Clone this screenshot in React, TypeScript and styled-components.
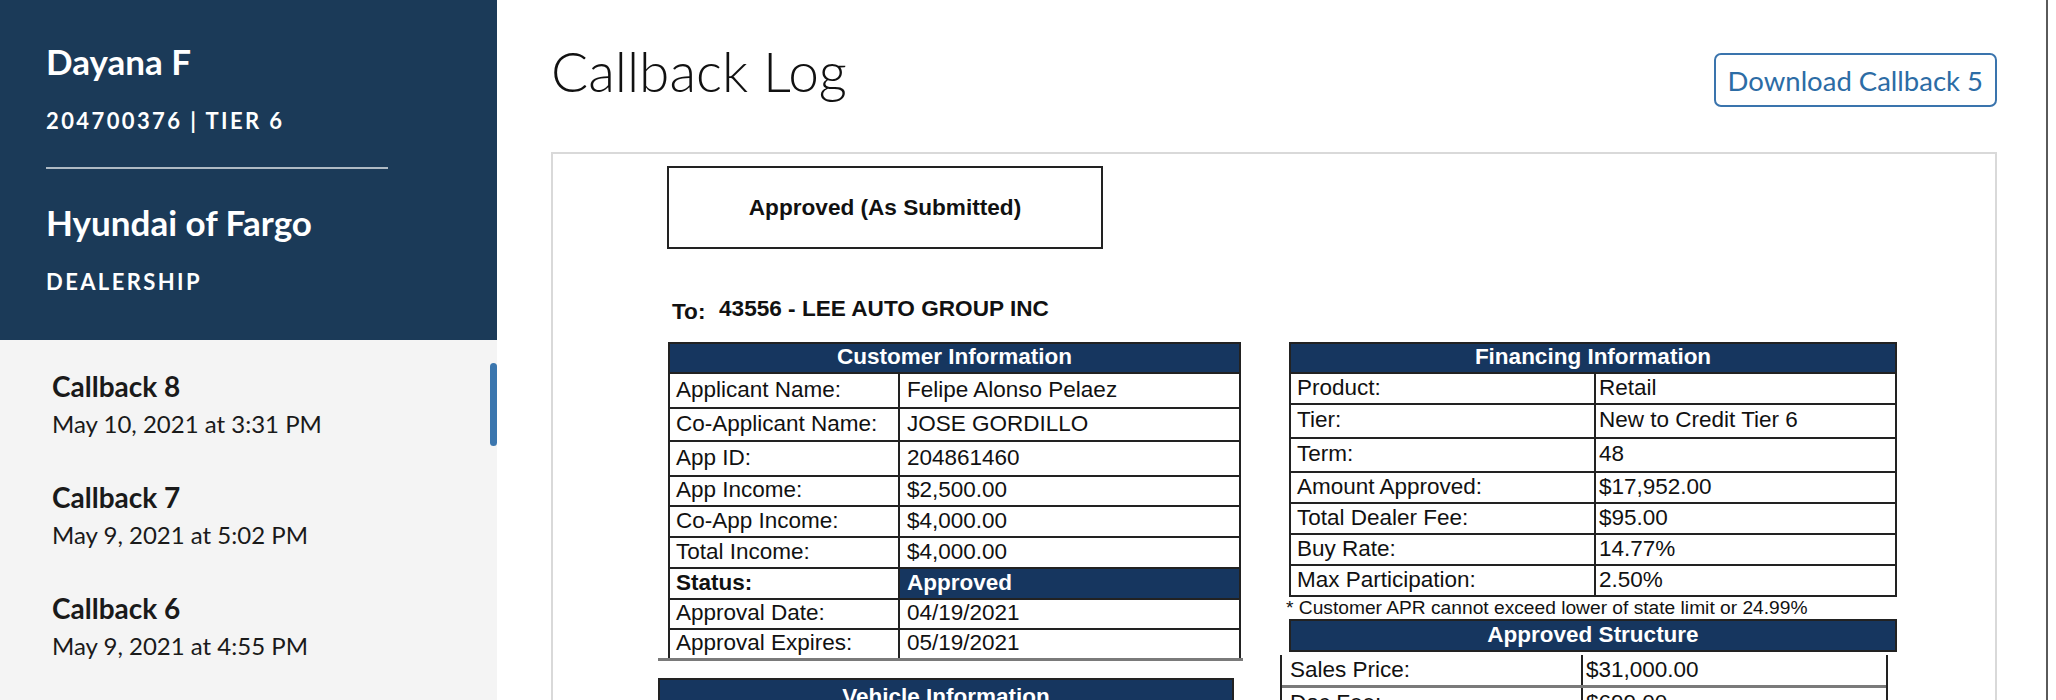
import styled, { createGlobalStyle } from 'styled-components';

const GlobalStyle = createGlobalStyle`
  html, body {
    margin: 0;
    padding: 0;
    background: #fff;
    overflow: hidden;
  }
  * {
    box-sizing: border-box;
  }
`;

const Page = styled.div`
  display: flex;
  height: 700px;
  overflow: hidden;
  font-family: Lato, "Open Sans", sans-serif;
`;

const Sidebar = styled.aside`
  width: 497px;
  flex-shrink: 0;
  display: flex;
  flex-direction: column;
  background: #f4f4f4;
  overflow: hidden;
`;

const SideHeader = styled.div`
  flex-shrink: 0;
  height: 340px;
  padding: 44px 0 0 46px;
  background: #1b3a58;
  color: #fff;
`;

const SideTitle = styled.h2<{ $gap?: number }>`
  margin: ${(p) => p.$gap ?? 0}px 0 0;
  font-size: 35px;
  font-weight: 700;
  line-height: 1;
`;

const SideMeta = styled.div`
  margin-top: 31px;
  font-size: 22px;
  font-weight: 700;
  letter-spacing: 2.4px;
  line-height: 1;
  text-transform: uppercase;
`;

const SideDivider = styled.hr`
  width: 342px;
  height: 2px;
  margin: 35px 0 0;
  border: none;
  background: rgba(255, 255, 255, 0.65);
`;

const CallbackList = styled.ul`
  position: relative;
  flex: 1;
  margin: 0;
  padding: 32px 0 0 52px;
  list-style: none;
  display: flex;
  flex-direction: column;
  gap: 47px;
`;

const CallbackItem = styled.li`
  display: flex;
  flex-direction: column;
  gap: 12px;
  color: #1a1a1a;
`;

const CallbackName = styled.span`
  font-size: 28px;
  font-weight: 700;
  line-height: 1;
`;

const CallbackDate = styled.span`
  font-size: 24px;
  line-height: 1;
`;

const ScrollThumb = styled.div`
  position: absolute;
  top: 23px;
  right: 0;
  width: 7px;
  height: 83px;
  border-radius: 4px;
  background: #3b76ae;
`;

const Main = styled.main`
  flex: 1;
  margin-right: 8px;
  padding: 44px 49px 0 54px;
  border-right: 2px solid #5a5a5a;
  overflow: hidden;
`;

const TopBar = styled.div`
  display: flex;
  justify-content: space-between;
  align-items: flex-start;
`;

const PageTitle = styled.h1`
  margin: 0;
  font-size: 55px;
  font-weight: 300;
  line-height: 1;
  color: #111;
`;

const OutlineButton = styled.button`
  margin-top: 9px;
  height: 54px;
  padding: 0 12px;
  border: 2px solid #3a74ad;
  border-radius: 7px;
  background: #fff;
  color: #2c6ca5;
  font-family: Lato, "Open Sans", sans-serif;
  font-size: 27.5px;
`;

const DocCard = styled.section`
  height: 560px;
  margin-top: 45px;
  padding: 12px 0 0 105px;
  border: 2px solid #d9d9d9;
  border-bottom: none;
  font-family: "Liberation Sans", Arial, sans-serif;
  color: #111;
`;

const DecisionBox = styled.div`
  width: 436px;
  height: 83px;
  margin-left: 9px;
  border: 2px solid #222;
  display: flex;
  align-items: center;
  justify-content: center;
  font-size: 22.6px;
  font-weight: 700;
`;

const ToLine = styled.div`
  display: flex;
  margin: 49px 0 0 14px;
  font-size: 22.6px;
  font-weight: 700;
  line-height: 1;
`;

const ToLabel = styled.span`
  position: relative;
  top: 3px;
  width: 47px;
`;

const Columns = styled.div`
  display: flex;
  gap: 46px;
  margin-top: 21px;
`;

const Column = styled.div<{ $width: number }>`
  width: ${(p) => p.$width}px;
  display: flex;
  flex-direction: column;
`;

const Table = styled.div<{ $width: number; $shift?: number; $bottom?: boolean; $top?: number }>`
  width: ${(p) => p.$width}px;
  margin-left: ${(p) => p.$shift ?? 0}px;
  margin-top: ${(p) => p.$top ?? 0}px;
  border-left: 2px solid #222;
  border-right: 2px solid #222;
  border-bottom: ${(p) => (p.$bottom ? '2px solid #222' : 'none')};
  font-size: 22.5px;
  line-height: 1;
`;

const TableHead = styled.div<{ $height: number }>`
  height: ${(p) => p.$height}px;
  border-top: 2px solid #222;
  background: #16365f;
  color: #fff;
  font-weight: 700;
  display: flex;
  align-items: center;
  justify-content: center;
`;

const Row = styled.div<{ $height: number; $split: number; $open?: boolean }>`
  height: ${(p) => p.$height}px;
  display: grid;
  grid-template-columns: ${(p) => p.$split}px 1fr;
  border-top: ${(p) => (p.$open ? 'none' : '2px solid #222')};
`;

const Cell = styled.div<{ $pad: number; $divider?: boolean; $strong?: boolean; $fill?: boolean }>`
  display: flex;
  align-items: center;
  padding-left: ${(p) => p.$pad}px;
  border-left: ${(p) => (p.$divider ? '2px solid #222' : 'none')};
  font-weight: ${(p) => (p.$strong ? 700 : 400)};
  background: ${(p) => (p.$fill ? '#16365f' : 'transparent')};
  color: ${(p) => (p.$fill ? '#fff' : 'inherit')};
  white-space: nowrap;
`;

const ScanLine = styled.div`
  height: 3px;
  background: #7a7a7a;
`;

const Footnote = styled.div`
  margin: 1px 0 0 -3px;
  font-size: 19.2px;
  line-height: 1;
  white-space: nowrap;
`;

const BlockHead = styled.div<{ $top: number; $width: number }>`
  width: ${(p) => p.$width}px;
  height: 48px;
  margin-top: ${(p) => p.$top}px;
  padding-top: 6px;
  border: 2px solid #222;
  background: #16365f;
  color: #fff;
  font-size: 22.5px;
  font-weight: 700;
  text-align: center;
  line-height: 1;
`;

type Line = { label: string; value: string; h: number; status?: boolean };

const customer: Line[] = [
  { label: 'Applicant Name:', value: 'Felipe Alonso Pelaez', h: 35 },
  { label: 'Co-Applicant Name:', value: 'JOSE GORDILLO', h: 33 },
  { label: 'App ID:', value: '204861460', h: 35 },
  { label: 'App Income:', value: '$2,500.00', h: 30 },
  { label: 'Co-App Income:', value: '$4,000.00', h: 31 },
  { label: 'Total Income:', value: '$4,000.00', h: 31 },
  { label: 'Status:', value: 'Approved', h: 31, status: true },
  { label: 'Approval Date:', value: '04/19/2021', h: 30 },
  { label: 'Approval Expires:', value: '05/19/2021', h: 30 },
];

const financing: Line[] = [
  { label: 'Product:', value: 'Retail', h: 31 },
  { label: 'Tier:', value: 'New to Credit Tier 6', h: 34 },
  { label: 'Term:', value: '48', h: 34 },
  { label: 'Amount Approved:', value: '$17,952.00', h: 31 },
  { label: 'Total Dealer Fee:', value: '$95.00', h: 31 },
  { label: 'Buy Rate:', value: '14.77%', h: 31 },
  { label: 'Max Participation:', value: '2.50%', h: 31 },
];

const structure: Line[] = [
  { label: 'Sales Price:', value: '$31,000.00', h: 30 },
  { label: 'Doc Fee:', value: '$699.00', h: 30 },
];

const callbacks = [
  { name: 'Callback 8', date: 'May 10, 2021 at 3:31 PM' },
  { name: 'Callback 7', date: 'May 9, 2021 at 5:02 PM' },
  { name: 'Callback 6', date: 'May 9, 2021 at 4:55 PM' },
];

export default function App() {
  return (
    <Page>
      <GlobalStyle />
      <Sidebar>
        <SideHeader>
          <SideTitle>Dayana F</SideTitle>
          <SideMeta>204700376 | Tier 6</SideMeta>
          <SideDivider />
          <SideTitle $gap={36}>Hyundai of Fargo</SideTitle>
          <SideMeta>Dealership</SideMeta>
        </SideHeader>
        <CallbackList>
          {callbacks.map((c) => (
            <CallbackItem key={c.name}>
              <CallbackName>{c.name}</CallbackName>
              <CallbackDate>{c.date}</CallbackDate>
            </CallbackItem>
          ))}
          <ScrollThumb />
        </CallbackList>
      </Sidebar>

      <Main>
        <TopBar>
          <PageTitle>Callback Log</PageTitle>
          <OutlineButton>Download Callback 5</OutlineButton>
        </TopBar>

        <DocCard>
          <DecisionBox>Approved (As Submitted)</DecisionBox>
          <ToLine>
            <ToLabel>To:</ToLabel>
            <span>43556 - LEE AUTO GROUP INC</span>
          </ToLine>

          <Columns>
            <Column $width={585}>
              <Table $width={573} $shift={10}>
                <TableHead $height={30}>Customer Information</TableHead>
                {customer.map((r) => (
                  <Row key={r.label} $height={r.h} $split={228}>
                    <Cell $pad={6} $strong={r.status}>{r.label}</Cell>
                    <Cell $pad={7} $divider $strong={r.status} $fill={r.status}>
                      {r.value}
                    </Cell>
                  </Row>
                ))}
              </Table>
              <ScanLine />
              <BlockHead $top={17} $width={576}>Vehicle Information</BlockHead>
            </Column>

            <Column $width={608}>
              <Table $width={608} $bottom>
                <TableHead $height={30}>Financing Information</TableHead>
                {financing.map((r) => (
                  <Row key={r.label} $height={r.h} $split={303}>
                    <Cell $pad={6}>{r.label}</Cell>
                    <Cell $pad={3} $divider>{r.value}</Cell>
                  </Row>
                ))}
              </Table>
              <Footnote>* Customer APR cannot exceed lower of state limit or 24.99%</Footnote>
              <Table $width={608} $bottom $top={2}>
                <TableHead $height={31}>Approved Structure</TableHead>
              </Table>
              <Table $width={608} $shift={-9} $top={3}>
                {structure.map((r, i) => (
                  <div key={r.label}>
                    {i > 0 && <ScanLine />}
                    <Row $height={r.h} $split={299} $open>
                      <Cell $pad={8}>{r.label}</Cell>
                      <Cell $pad={3} $divider>{r.value}</Cell>
                    </Row>
                  </div>
                ))}
              </Table>
            </Column>
          </Columns>
        </DocCard>
      </Main>
    </Page>
  );
}
